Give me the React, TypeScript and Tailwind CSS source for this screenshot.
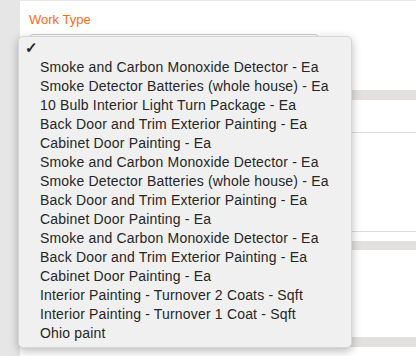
import React from "react";

const items = [
  "Smoke and Carbon Monoxide Detector - Ea",
  "Smoke Detector Batteries (whole house) - Ea",
  "10 Bulb Interior Light Turn Package - Ea",
  "Back Door and Trim Exterior Painting - Ea",
  "Cabinet Door Painting - Ea",
  "Smoke and Carbon Monoxide Detector - Ea",
  "Smoke Detector Batteries (whole house) - Ea",
  "Back Door and Trim Exterior Painting - Ea",
  "Cabinet Door Painting - Ea",
  "Smoke and Carbon Monoxide Detector - Ea",
  "Back Door and Trim Exterior Painting - Ea",
  "Cabinet Door Painting - Ea",
  "Interior Painting - Turnover 2 Coats - Sqft",
  "Interior Painting - Turnover 1 Coat - Sqft",
  "Ohio paint",
];

export default function App() {
  return (
    <div
      className="relative h-[356px] w-[416px] overflow-hidden bg-[#e6e6e6] pl-[20px] pt-px"
      style={{ fontFamily: '"Liberation Sans", Arial, sans-serif' }}
    >
      <div className="flex flex-col">
        {/* work type card */}
        <div className="h-[89px] bg-white pl-[9px] pt-[11px]">
          <label className="block text-[13px] leading-[16px] text-[#ff6a13]">Work Type</label>
          <div className="mt-[6px] h-[26px] w-[290px] rounded-[4px] border border-[#cfcfcf] bg-white" />
        </div>
        <div className="h-[10px] bg-[#e2e1df]" />
        <div className="flex flex-col bg-white">
          <div className="h-[33px] border-b border-[#dcdcdc]" />
          <div className="h-[99px] border-b border-[#dcdcdc]" />
          <div className="h-[9px]" />
        </div>
        <div className="h-[9px] bg-[#e2e1df]" />
        <div className="h-[87px] bg-white" />
        <div className="h-[10px] bg-[#e2e1df]" />
        <div className="h-[20px] bg-white" />
      </div>

      {/* open select menu */}
      <div className="absolute left-[18px] top-[36px] w-[334px] rounded-[5px] border border-[#d6d6d6] bg-[#f0f0f0] pb-[4px] pt-[2px] shadow-[0_3px_10px_rgba(0,0,0,0.28)]">
        <div className="flex h-[19px] items-center pl-[6px] text-[15px] font-bold text-[#222]">✓</div>
        {items.map((item, i) => (
          <div
            key={i}
            className="flex h-[19px] items-center whitespace-nowrap pl-[21px] text-[14px] tracking-[0.18px] text-[#262626]"
          >
            {item}
          </div>
        ))}
      </div>
    </div>
  );
}
